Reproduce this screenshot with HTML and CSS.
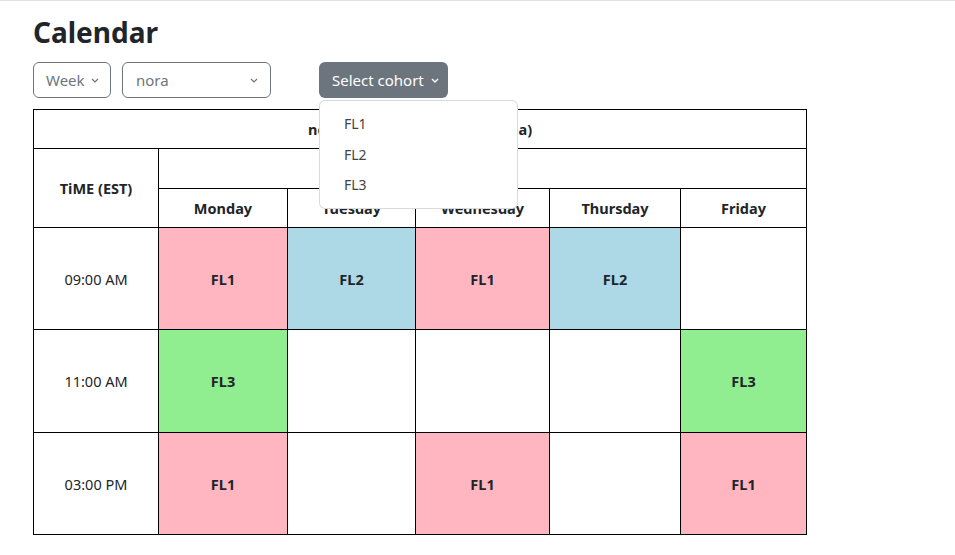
FILE: index.html
```html
<!DOCTYPE html>
<html>
<head>
<meta charset="utf-8">
<link rel="stylesheet" href="styles.css">
</head>
<body>
<div class="topbar"></div>
<main class="page">
  <h2 class="title">Calendar</h2>
  <div class="controls">
    <div class="select select-week">
      <span>Week</span>
      <svg class="chev" width="8" height="5" viewBox="0 0 8 5"><path d="M1 1l3 3 3-3" fill="none" stroke="#6c757d" stroke-width="1.2"/></svg>
    </div>
    <div class="select select-user">
      <span>nora</span>
      <svg class="chev" width="8" height="5" viewBox="0 0 8 5"><path d="M1 1l3 3 3-3" fill="none" stroke="#6c757d" stroke-width="1.2"/></svg>
    </div>
    <div class="dropdown">
      <button class="btn-cohort">Select cohort
        <svg class="chev" width="8" height="5" viewBox="0 0 8 5"><path d="M1 1l3 3 3-3" fill="none" stroke="#fff" stroke-width="1.4"/></svg>
      </button>
      <ul class="menu">
        <li>FL1</li>
        <li>FL2</li>
        <li>FL3</li>
      </ul>
    </div>
  </div>
  <table class="cal">
    <colgroup>
      <col class="c-time"><col class="c-mon"><col class="c-tue"><col class="c-wed"><col class="c-thu"><col class="c-fri">
    </colgroup>
    <thead>
      <tr class="r-title"><th colspan="6">nora's Week Schedule (Canada)</th></tr>
      <tr class="r-blank"><th rowspan="2">TiME (EST)</th><th colspan="5"></th></tr>
      <tr class="r-days"><th>Monday</th><th>Tuesday</th><th>Wednesday</th><th>Thursday</th><th>Friday</th></tr>
    </thead>
    <tbody>
      <tr class="r-slot">
        <td class="time">09:00 AM</td>
        <td class="fl1">FL1</td><td class="fl2">FL2</td><td class="fl1">FL1</td><td class="fl2">FL2</td><td></td>
      </tr>
      <tr class="r-slot r-mid">
        <td class="time">11:00 AM</td>
        <td class="fl3">FL3</td><td></td><td></td><td></td><td class="fl3">FL3</td>
      </tr>
      <tr class="r-slot">
        <td class="time">03:00 PM</td>
        <td class="fl1">FL1</td><td></td><td class="fl1">FL1</td><td></td><td class="fl1">FL1</td>
      </tr>
    </tbody>
  </table>
</main>
</body>
</html>
```

FILE: styles.css
```css
* { box-sizing: border-box; }
html, body { margin: 0; padding: 0; background: #fff; }
body {
  font-family: "Noto Sans", "Open Sans", sans-serif;
  font-size: 15px;
  color: #212529;
}
.topbar { height: 1px; background: #dee2e6; }
.page { padding: 14px 0 0 33px; }
.title {
  margin: 0 0 12px 0;
  font-size: 28px;
  line-height: 35px;
  font-weight: 700;
  color: #212529;
}
.controls { display: flex; align-items: flex-start; height: 36px; margin-bottom: 11px; }
.select {
  height: 36px;
  border: 1px solid #6c757d;
  border-radius: 6px;
  display: flex;
  align-items: center;
  justify-content: space-between;
  color: #6c757d;
  font-size: 15px;
}
.select-week { width: 78px; padding: 0 11px 0 12px; }
.select-user { width: 149px; padding: 0 12px 0 13px; margin-left: 11px; }
.chev { display: block; }
.dropdown { position: relative; margin-left: 48px; }
.btn-cohort {
  height: 36px;
  width: 129px;
  border: none;
  border-radius: 6px;
  background: #6c757d;
  color: #fff;
  font-family: inherit;
  font-size: 15px;
  display: flex;
  align-items: center;
  gap: 7px;
  padding: 0 0 0 13px;
}
.menu {
  position: absolute;
  top: 38px;
  left: 0;
  width: 199px;
  height: 109px;
  margin: 0;
  padding: 8px 0;
  list-style: none;
  background: #fff;
  border: 1px solid rgba(0,0,0,.15);
  border-radius: 6px;
  z-index: 5;
}
.menu li {
  padding: 0 0 0 24px;
  height: 30.5px;
  line-height: 30.5px;
  font-size: 14px;
  color: #444;
}
.cal {
  border-collapse: collapse;
  table-layout: fixed;
  width: 774px;
}
.cal th, .cal td {
  border: 1px solid #000;
  text-align: center;
  vertical-align: middle;
  padding: 0;
}
.cal th { font-weight: 700; font-size: 14.5px; }
.c-time { width: 125px; }
.c-mon { width: 129px; }
.c-tue { width: 128px; }
.c-wed { width: 134px; }
.c-thu { width: 131px; }
.c-fri { width: 126px; }
.r-title { height: 39px; }
.r-blank { height: 40px; }
.r-days { height: 39px; }
.r-slot { height: 102px; }
.r-mid { height: 103px; }
.cal td { font-weight: 700; font-size: 14.5px; }
.cal td.time { font-weight: 400; font-size: 14.5px; }
.fl1 { background: #ffb6c1; }
.fl2 { background: #add8e6; }
.fl3 { background: #90ee90; }
```
